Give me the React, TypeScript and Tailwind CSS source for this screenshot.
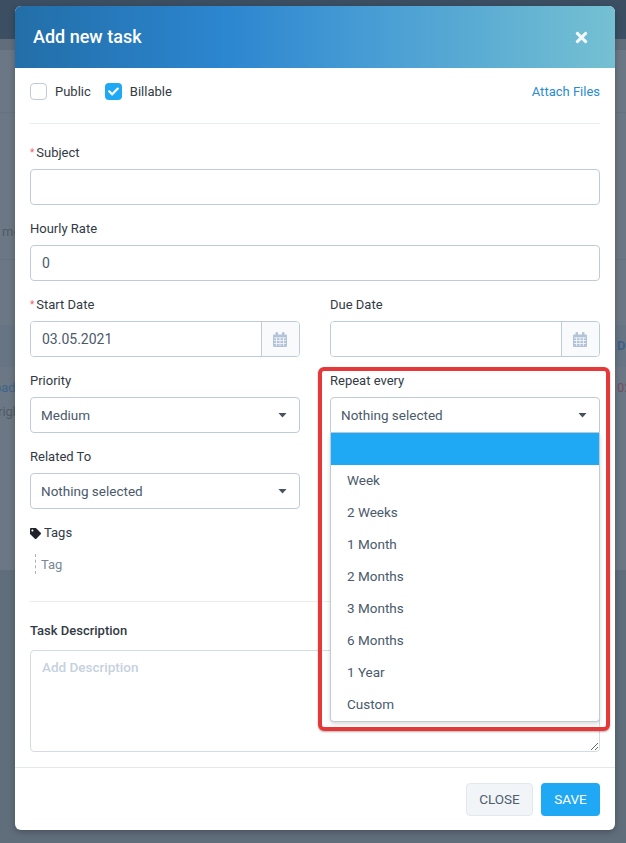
import React from "react";
import { FaCheck, FaTag, FaTimes } from "react-icons/fa";

function Req() {
  return <span className="mr-[2px] text-[10px] text-[#f0626a]">*</span>;
}

function Label({ children, required }: { children: React.ReactNode; required?: boolean }) {
  return (
    <label className="mb-[7px] flex h-5 items-center pt-[2px] text-[13px] leading-5 text-[#323a45]">
      {required && <Req />}
      {children}
    </label>
  );
}

function CalendarIcon() {
  return (
    <svg width="14" height="15" viewBox="0 0 14 15" fill="none" className="text-[#b4c3d8]">
      <path d="M1 2.5h12a1 1 0 0 1 1 1V14a1 1 0 0 1-1 1H1a1 1 0 0 1-1-1V3.5a1 1 0 0 1 1-1z" fill="currentColor" />
      <rect x="2.5" y="0" width="2.5" height="4" rx="1" fill="currentColor" />
      <rect x="9" y="0" width="2.5" height="4" rx="1" fill="currentColor" />
      <g fill="#f6f9fc">
        <rect x="1" y="5.5" width="12" height="0.8" />
        <rect x="1" y="8.2" width="12" height="0.8" />
        <rect x="1" y="11" width="12" height="0.8" />
        <rect x="3.2" y="5.5" width="0.8" height="8.5" />
        <rect x="6.6" y="5.5" width="0.8" height="8.5" />
        <rect x="10" y="5.5" width="0.8" height="8.5" />
      </g>
    </svg>
  );
}

function Caret() {
  return (
    <svg width="9" height="5" viewBox="0 0 9 5" className="shrink-0">
      <path d="M0.5 0h8L4.5 4.6z" fill="#46525f" />
    </svg>
  );
}

function DateField({ value }: { value?: string }) {
  return (
    <div className="flex h-9 overflow-hidden rounded border border-[#bfcbd9] bg-white">
      <input
        readOnly
        defaultValue={value}
        className="min-w-0 flex-1 bg-white pl-[11px] text-sm text-[#4a5a6c] outline-none"
      />
      <div className="flex w-[38px] items-center justify-center border-l border-[#bfcbd9] bg-[#f8fafc] pr-[1px]">
        <CalendarIcon />
      </div>
    </div>
  );
}

function Select({ value, open }: { value: string; open?: boolean }) {
  return (
    <div
      className={`flex h-9 items-center justify-between border border-[#bfcbd9] bg-white pl-[10px] pr-[12px] text-[13.5px] text-[#4a5a6c] ${
        open ? "rounded-t" : "rounded"
      }`}
    >
      <span>{value}</span>
      <Caret />
    </div>
  );
}

const repeatOptions = ["Week", "2 Weeks", "1 Month", "2 Months", "3 Months", "6 Months", "1 Year", "Custom"];

export default function App() {
  return (
    <div className="relative h-[843px] w-[626px] overflow-hidden bg-[#6b7784] font-[Roboto,sans-serif]">
      {/* page behind the overlay */}
      <div className="flex h-full flex-col text-[13px]">
        <div className="h-[39px] bg-[#3c4e62]" />
        <div className="h-[11px] bg-[#616d7a]" />
        <div className="h-[63px] border-b border-[#66727f]" />
        <div className="flex h-[147px] items-center border-b border-[#66727f] pt-[91px] text-[#4f5b68]">
          <span className="pl-[2px]">me</span>
        </div>
        <div className="h-[65px]" />
        <div className="flex h-[42px] items-center justify-end bg-[#667483] font-bold text-[#3f5f86]">
          <span className="w-[9px] overflow-hidden">Du</span>
        </div>
        <div className="flex h-[203px] flex-col">
          <div className="flex items-center justify-between pt-[12px] leading-[18px]">
            <span className="-ml-[6px] text-[#3f6488]">pad</span>
            <span className="w-[9px] overflow-hidden text-[#7a4b63]">02</span>
          </div>
          <span className="mt-[6px] -ml-[2px] leading-[18px] text-[#4f5b68]">right</span>
        </div>
        <div className="flex-1 bg-[#606d7b]" />
      </div>

      {/* modal */}
      <div className="absolute left-[15px] top-[6px] w-[600px] overflow-hidden rounded-md bg-white shadow-[0_2px_6px_rgba(0,0,0,0.25)]">
        <div className="flex h-[62px] items-center justify-between bg-[linear-gradient(90deg,#226ea8_0%,#2c86d0_35%,#4a9fd4_62%,#75c0d2_100%)] pl-[18px] pr-[25px]">
          <h2 className="text-lg font-medium text-white">Add new task</h2>
          <FaTimes className="text-[17px] text-[#f3f8fb]" />
        </div>

        <div className="px-[15px]">
          <div className="mb-[23px] mt-[15px] flex h-[17px] items-center text-[13px] text-[#323a45]">
            <span className="h-[17px] w-[17px] rounded border border-[#bfcbd9] bg-white" />
            <span className="ml-2">Public</span>
            <span className="ml-[14px] flex h-[17px] w-[17px] items-center justify-center rounded bg-[#1fa8f3]">
              <FaCheck className="text-[11px] text-white" />
            </span>
            <span className="ml-2">Billable</span>
            <a className="ml-auto text-[#2a8bd3]">Attach Files</a>
          </div>
          <hr className="mb-[18px] border-[#e9edf1]" />

          <div className="mb-[13px]">
            <Label required>Subject</Label>
            <input readOnly className="block h-9 w-full rounded border border-[#bfcbd9] bg-white px-3 outline-none" />
          </div>
          <div className="mb-[13px]">
            <Label>Hourly Rate</Label>
            <input
              readOnly
              defaultValue="0"
              className="block h-9 w-full rounded border border-[#bfcbd9] bg-white pl-[11px] text-sm text-[#4a5a6c] outline-none"
            />
          </div>

          <div className="grid grid-cols-2 gap-x-[30px]">
            <div className="mb-[13px]">
              <Label required>Start Date</Label>
              <DateField value="03.05.2021" />
            </div>
            <div className="mb-[13px]">
              <Label>Due Date</Label>
              <DateField />
            </div>
            <div className="mb-[13px]">
              <Label>Priority</Label>
              <Select value="Medium" />
            </div>
            <div className="relative mb-[13px]">
              <Label>Repeat every</Label>
              <Select value="Nothing selected" open />
              <ul className="absolute left-0 right-0 top-full z-20 rounded-b border border-t-0 border-[#bfcbd9] bg-white text-[13.5px] text-[#4a5a6c] shadow-[0_2px_4px_rgba(0,0,0,0.15)]">
                <li className="h-8 bg-[#1fa8f3]" />
                {repeatOptions.map((o) => (
                  <li key={o} className="flex h-8 items-center pb-[2px] pl-4">
                    {o}
                  </li>
                ))}
              </ul>
            </div>
            <div className="mb-[13px]">
              <Label>Related To</Label>
              <Select value="Nothing selected" />
            </div>
          </div>

          <div className="flex h-5 items-center pt-[2px] text-[13px] text-[#323a45]">
            <FaTag className="mr-[3px] text-[11px] text-[#1f2329]" />
            Tags
          </div>
          <div className="ml-[5px] mt-3 flex h-5 items-center border-l border-dashed border-[#a9b2bc] pl-[5px] pt-[1px] text-[13px] text-[#7b8794]">
            Tag
          </div>
          <hr className="mb-[18px] mt-[27px] border-[#e9edf1]" />

          <div className="mb-[10px] h-5 pt-[1px] text-[13px] font-medium leading-5 text-[#323a45]">Task Description</div>
          <textarea
            readOnly
            placeholder="Add Description"
            className="block h-[102px] w-full rounded border border-[#d3dbe5] bg-white py-[6px] pl-[11px] text-[13.5px] font-medium text-[#4a5a6c] outline-none placeholder:text-[#c6d1e0]"
          />
        </div>

        <div className="mt-[15px] flex justify-end gap-2 border-t border-[#e4e8ec] px-[15px] pb-[14px] pt-[15px]">
          <button className="h-[33px] w-[67px] rounded border border-[#e3e8ee] bg-[#f1f5f8] text-[13.5px] text-[#4f5d6e]">
            CLOSE
          </button>
          <button className="h-[33px] w-[59px] rounded bg-[#1fa8f3] text-[13.5px] text-white">SAVE</button>
        </div>
      </div>

      {/* highlight annotation */}
      <div className="pointer-events-none absolute left-[318px] top-[367px] h-[364px] w-[292px] rounded-md border-4 border-[#e53838] shadow-[0_1px_2px_rgba(0,0,0,0.3)]" />
    </div>
  );
}
